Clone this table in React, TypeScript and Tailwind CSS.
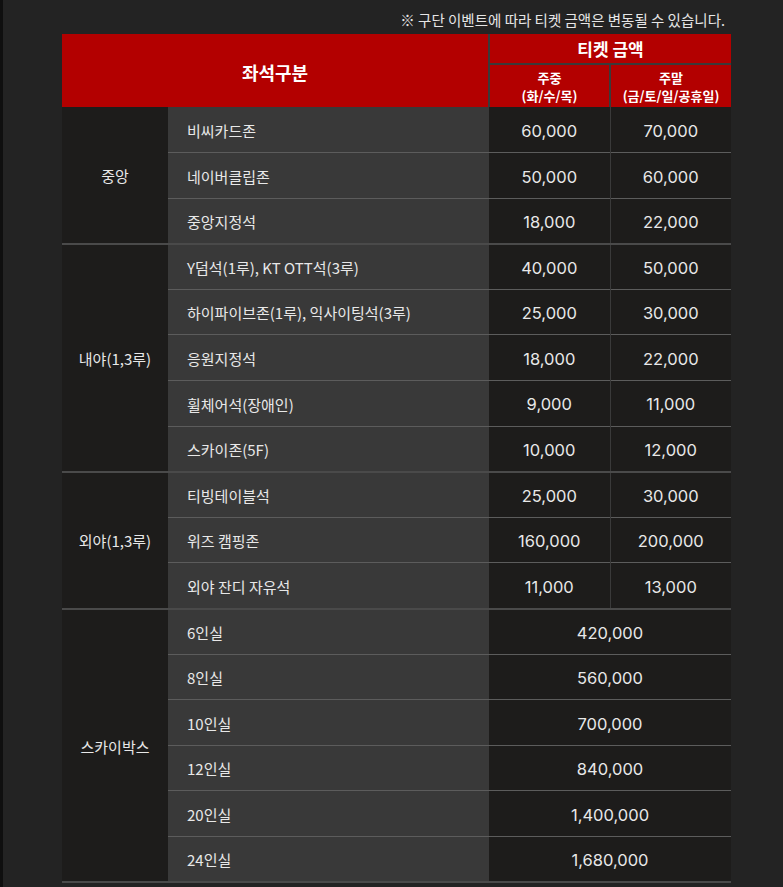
import React from "react";

type Seat = { name: string; weekday: string; weekend?: string };
type Group = { label: string; seats: Seat[] };

const groups: Group[] = [
  {
    label: "중앙",
    seats: [
      { name: "비씨카드존", weekday: "60,000", weekend: "70,000" },
      { name: "네이버클립존", weekday: "50,000", weekend: "60,000" },
      { name: "중앙지정석", weekday: "18,000", weekend: "22,000" },
    ],
  },
  {
    label: "내야(1,3루)",
    seats: [
      { name: "Y덤석(1루), KT OTT석(3루)", weekday: "40,000", weekend: "50,000" },
      { name: "하이파이브존(1루), 익사이팅석(3루)", weekday: "25,000", weekend: "30,000" },
      { name: "응원지정석", weekday: "18,000", weekend: "22,000" },
      { name: "휠체어석(장애인)", weekday: "9,000", weekend: "11,000" },
      { name: "스카이존(5F)", weekday: "10,000", weekend: "12,000" },
    ],
  },
  {
    label: "외야(1,3루)",
    seats: [
      { name: "티빙테이블석", weekday: "25,000", weekend: "30,000" },
      { name: "위즈 캠핑존", weekday: "160,000", weekend: "200,000" },
      { name: "외야 잔디 자유석", weekday: "11,000", weekend: "13,000" },
    ],
  },
  {
    label: "스카이박스",
    seats: [
      { name: "6인실", weekday: "420,000" },
      { name: "8인실", weekday: "560,000" },
      { name: "10인실", weekday: "700,000" },
      { name: "12인실", weekday: "840,000" },
      { name: "20인실", weekday: "1,400,000" },
      { name: "24인실", weekday: "1,680,000" },
    ],
  },
];

const price =
  "bg-[#1d1c1b] pt-[3px] text-center text-[16.5px] font-['Inter','Noto_Sans_CJK_KR',sans-serif]";

export default function App() {
  return (
    <main
      className="min-h-screen bg-[#232323] border-l-[3px] border-[#0f0f0f] text-[#e8e8e8]"
      style={{ fontFamily: '"Noto Sans CJK KR", "Noto Sans", sans-serif' }}
    >
      <div className="w-[669px] ml-[59px] pt-[10px]">
        {/* Notice */}
        <p className="text-right pr-[6px] text-[14.5px] leading-[20px] h-[24px] text-[#e6e6e6]">
          ※ 구단 이벤트에 따라 티켓 금액은 변동될 수 있습니다.
        </p>

        <table className="w-full border-collapse table-fixed">
          <colgroup>
            <col className="w-[106px]" />
            <col className="w-[321px]" />
            <col className="w-[121px]" />
            <col className="w-[121px]" />
          </colgroup>
          <thead>
            <tr className="h-[30px]">
              <th
                colSpan={2}
                rowSpan={2}
                className="bg-[#b30000] pt-[3px] text-white text-[18px] font-bold border-r-2 border-[#3a3a3a]"
              >
                좌석구분
              </th>
              <th
                colSpan={2}
                className="bg-[#b30000] pt-[1px] text-white text-[17px] font-bold border-b-2 border-[#3a3a3a]"
              >
                티켓 금액
              </th>
            </tr>
            <tr className="h-[43px]">
              <th className="bg-[#b30000] pt-[1px] text-white text-[13px] font-bold leading-[18px] border-r-2 border-[#3a3a3a]">
                <div>주중</div>
                <div>(화/수/목)</div>
              </th>
              <th className="bg-[#b30000] pt-[1px] text-white text-[13px] font-bold leading-[18px]">
                <div>주말</div>
                <div>(금/토/일/공휴일)</div>
              </th>
            </tr>
          </thead>
          <tbody>
            {groups.map((group) =>
              group.seats.map((seat, i) => (
                <tr
                  key={group.label + seat.name}
                  className={
                    i === group.seats.length - 1
                      ? "h-[45.6px] border-b-2 border-[#4a4a4a]"
                      : "h-[45.6px] border-b border-[#5c5c5c]"
                  }
                >
                  {i === 0 && (
                    <td
                      rowSpan={group.seats.length}
                      className="bg-[#1d1c1b] pt-[3px] text-center text-[15px]"
                    >
                      {group.label}
                    </td>
                  )}
                  <td className="bg-[#393939] pt-[3px] pl-[19px] text-[15px]">{seat.name}</td>
                  {seat.weekend ? (
                    <>
                      <td className={price + " border-r border-[#3a3a3a]"}>{seat.weekday}</td>
                      <td className={price}>{seat.weekend}</td>
                    </>
                  ) : (
                    <td colSpan={2} className={price}>
                      {seat.weekday}
                    </td>
                  )}
                </tr>
              ))
            )}
          </tbody>
        </table>
      </div>
    </main>
  );
}
